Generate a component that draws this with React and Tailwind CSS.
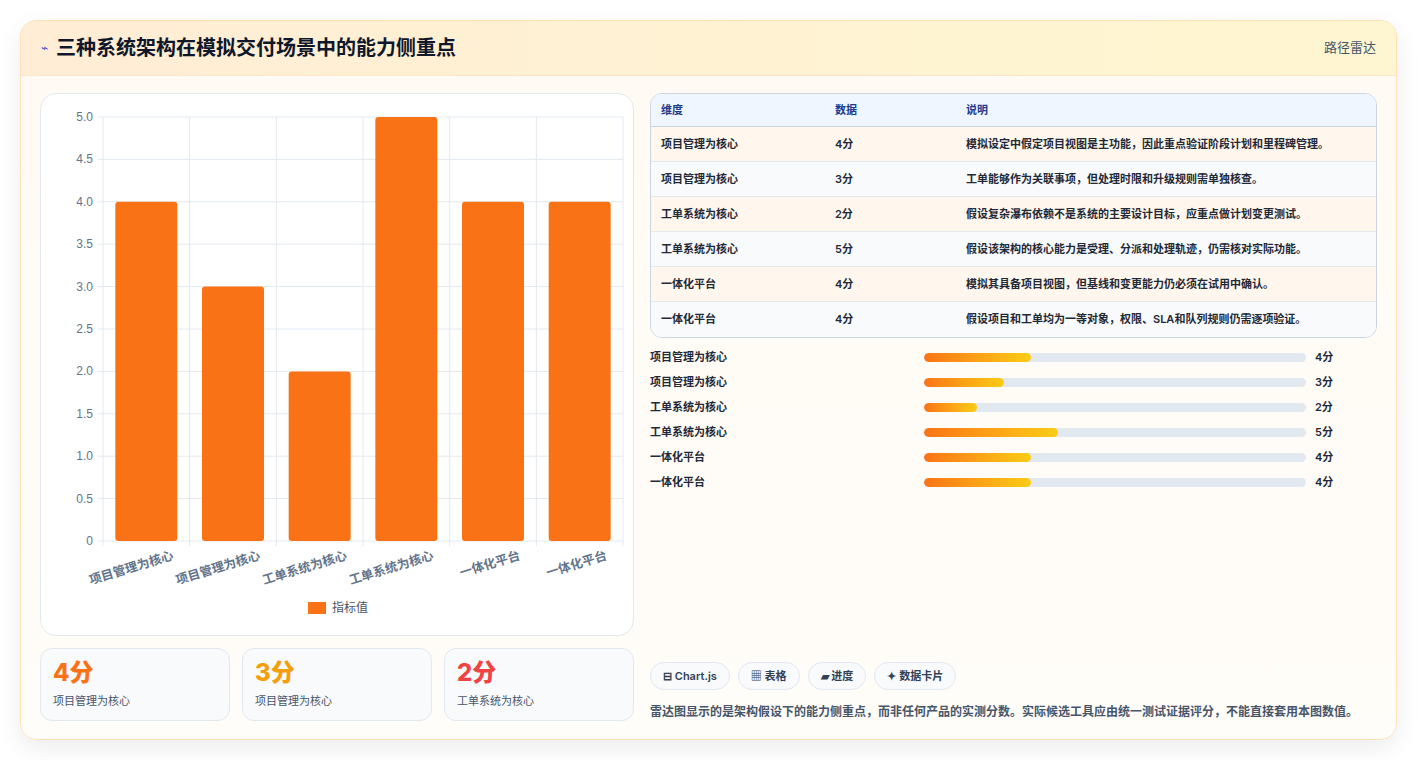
import React from "react";

const rows = [
  ["项目管理为核心", 4, "模拟设定中假定项目视图是主功能，因此重点验证阶段计划和里程碑管理。"],
  ["项目管理为核心", 3, "工单能够作为关联事项，但处理时限和升级规则需单独核查。"],
  ["工单系统为核心", 2, "假设复杂瀑布依赖不是系统的主要设计目标，应重点做计划变更测试。"],
  ["工单系统为核心", 5, "假设该架构的核心能力是受理、分派和处理轨迹，仍需核对实际功能。"],
  ["一体化平台", 4, "模拟其具备项目视图，但基线和变更能力仍必须在试用中确认。"],
  ["一体化平台", 4, "假设项目和工单均为一等对象，权限、SLA和队列规则仍需逐项验证。"],
];

function Chart() {
  const x0 = 62, x1 = 582, y0 = 447, y1 = 23;
  const step = (x1 - x0) / 6;
  const ys = [0, 0.5, 1, 1.5, 2, 2.5, 3, 3.5, 4, 4.5, 5];
  const Y = (v) => y0 - ((y0 - y1) * v) / 5;
  return (
    <svg width="594" height="543" viewBox="0 0 594 543" style={{ fontFamily: "Liberation Sans, Noto Sans CJK SC, sans-serif" }}>
      {ys.map((v) => (
        <g key={v}>
          <line x1={x0 - 5} x2={x1} y1={Y(v)} y2={Y(v)} stroke="#e2e8f0" />
          <text x={x0 - 10} y={Y(v) + 4} fontSize="12" fill="#64748b" textAnchor="end">{v.toFixed(1).replace(".0", v === 0 ? "" : ".0")}</text>
        </g>
      ))}
      {[0, 1, 2, 3, 4, 5, 6].map((i) => (
        <line key={i} x1={x0 + i * step} x2={x0 + i * step} y1={y1} y2={y0 + 5} stroke="#e2e8f0" />
      ))}
      {rows.map((r, i) => {
        const cx = x0 + step * (i + 0.5);
        return (
          <g key={i}>
            <rect x={cx - 31} y={Y(r[1])} width="62" height={y0 - Y(r[1])} rx="3" fill="#f97316" />
            <text x={cx + 28} y={y0 + 18} fontSize="12.5" fontWeight="600" fill="#64748b" textAnchor="end" transform={`rotate(-17 ${cx + 28} ${y0 + 18})`}>{r[0]}</text>
          </g>
        );
      })}
      <rect x="267" y="508" width="18" height="12" fill="#f97316" />
      <text x="291" y="518" fontSize="12" fill="#475569">指标值</text>
    </svg>
  );
}

export default function App() {
  return (
    <div className="min-h-[760px] bg-white p-[20px]" style={{ fontFamily: "Inter, 'Noto Sans CJK SC', sans-serif" }}>
      <div className="rounded-2xl border border-[#fde2b8] bg-gradient-to-b from-[#fffaf3] to-[#fffdf9] shadow-[0_8px_24px_rgba(0,0,0,0.08)] overflow-hidden">
        <div className="flex items-center justify-between h-[55px] px-5 bg-gradient-to-r from-[#ffedd5] to-[#fef6d0] border-b border-[#fde7c8]">
          <div className="flex items-center gap-2">
            <span className="text-[#4f46e5] text-xs">⌁</span>
            <span className="text-[20px] font-bold text-[#0f172a]">三种系统架构在模拟交付场景中的能力侧重点</span>
          </div>
          <span className="text-[13px] text-[#475569]">路径雷达</span>
        </div>
        <div className="flex gap-4 px-[19px] pt-[17px] pb-[18px]">
          <div className="w-[594px] flex flex-col gap-3">
            <div className="h-[543px] rounded-2xl border border-[#e2e8f0] bg-white overflow-hidden"><Chart /></div>
            <div className="grid grid-cols-3 gap-3">
              {[["4分", "text-[#f97316]", "项目管理为核心"], ["3分", "text-[#f59e0b]", "项目管理为核心"], ["2分", "text-[#ef4444]", "工单系统为核心"]].map((k, i) => (
                <div key={i} className="h-[73px] rounded-xl border border-[#e2e8f0] bg-[#f8fafc] px-3 pt-2">
                  <div className={`text-[24px] font-extrabold leading-8 ${k[1]}`}>{k[0]}</div>
                  <div className="text-[11px] text-[#475569] mt-1">{k[2]}</div>
                </div>
              ))}
            </div>
          </div>
          <div className="flex-1 flex flex-col">
            <div className="rounded-xl border border-[#cbd5e1] overflow-hidden bg-white">
              <div className="flex h-[33px] items-center bg-[#eff6ff] border-b border-[#cbd5e1] text-[11px] font-semibold text-[#1e3a8a]">
                <div className="w-[184px] pl-[10px]">维度</div><div className="w-[131px]">数据</div><div>说明</div>
              </div>
              {rows.map((r, i) => (
                <div key={i} className={`flex h-[35px] items-center text-[11px] font-semibold text-[#1f2937] ${i < 5 ? "border-b border-[#e2e8f0]" : ""} ${i % 2 === 0 ? "bg-[#fff7ed]" : "bg-[#f8fafc]"}`}>
                  <div className="w-[184px] pl-[10px]">{r[0]}</div><div className="w-[131px]">{r[1]}分</div><div>{r[2]}</div>
                </div>
              ))}
            </div>
            <div className="flex flex-col gap-[11px] mt-[12px]">
              {rows.map((r, i) => (
                <div key={i} className="flex items-center h-[14px] text-[11px] font-semibold text-[#1f2937]">
                  <div className="w-[274px]">{r[0]}</div>
                  <div className="w-[382px] h-[9px] rounded-full bg-[#e2e8f0] overflow-hidden">
                    <div className="h-full rounded-full bg-gradient-to-r from-[#f97316] to-[#facc15]" style={{ width: `${r[1] * 7}%` }} />
                  </div>
                  <div className="ml-[9px]">{r[1]}分</div>
                </div>
              ))}
            </div>
            <div className="flex-1" />
            <div className="flex gap-2">
              {["⊟ Chart.js", "▦ 表格", "▰ 进度", "✦ 数据卡片"].map((c) => (
                <span key={c} className="h-[28px] px-3 flex items-center rounded-full border border-[#e2e8f0] bg-[#f8fafc] text-[11px] font-semibold text-[#334155]">{c}</span>
              ))}
            </div>
            <p className="mt-[12px] text-[12px] leading-[19px] font-semibold text-[#475569]">雷达图显示的是架构假设下的能力侧重点，而非任何产品的实测分数。实际候选工具应由统一测试证据评分，不能直接套用本图数值。</p>
          </div>
        </div>
      </div>
    </div>
  );
}
